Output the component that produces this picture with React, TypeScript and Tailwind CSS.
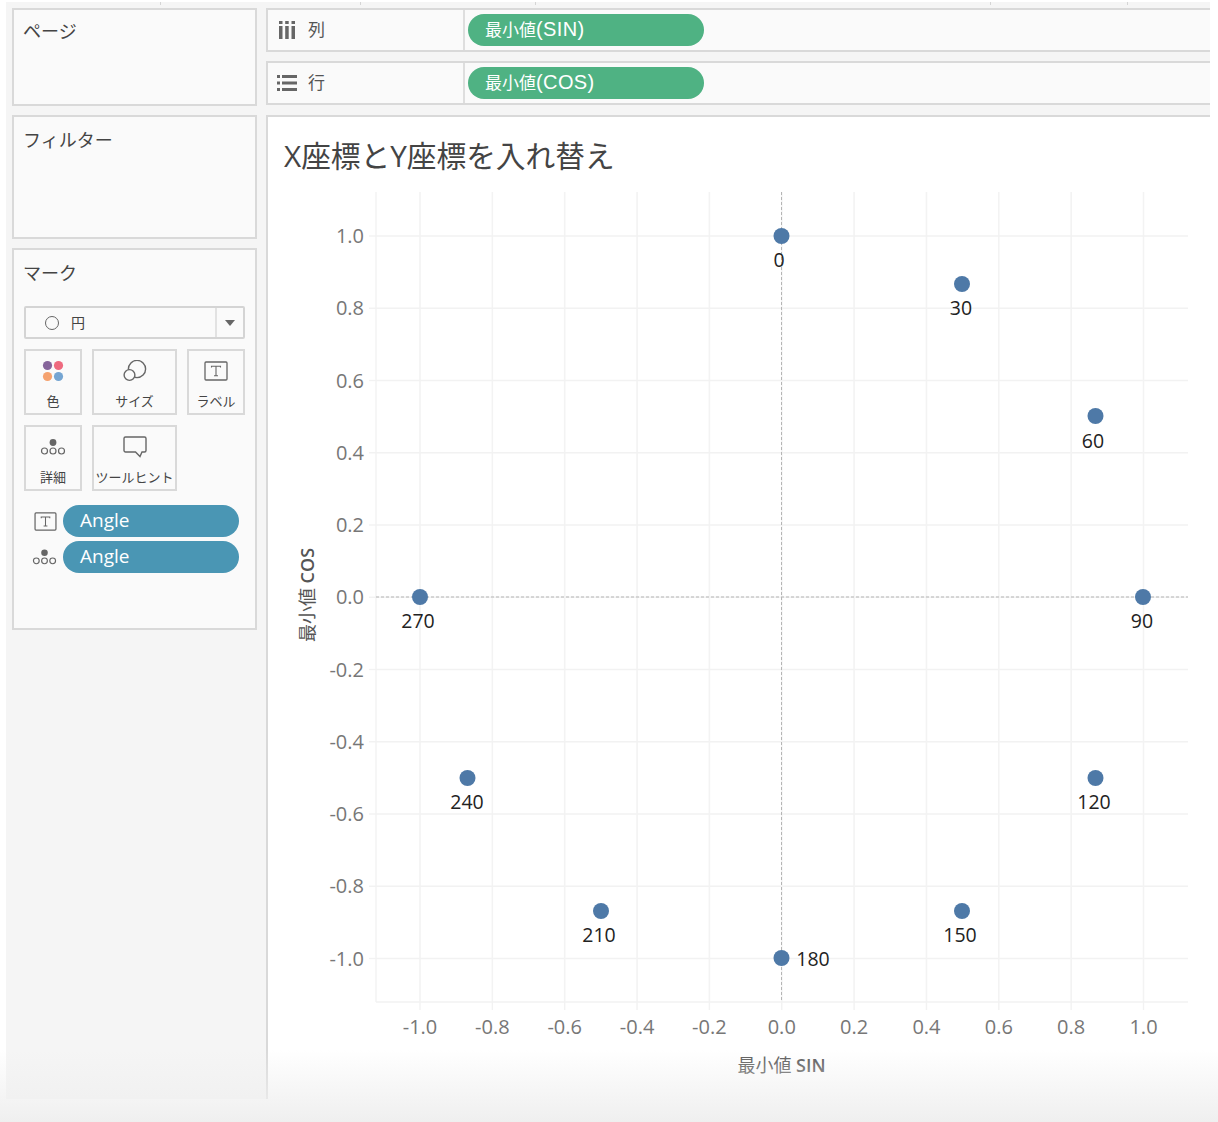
import React from 'react';

const sans = "font-['Open_Sans','Noto_Sans_CJK_JP',sans-serif]";

const points = [
  { a: 0, x: 781.5, y: 236, lx: 779, ly: 267 },
  { a: 30, x: 962, y: 284, lx: 961, ly: 315 },
  { a: 60, x: 1095.5, y: 416, lx: 1093, ly: 448 },
  { a: 90, x: 1143, y: 597, lx: 1142, ly: 628 },
  { a: 120, x: 1095.5, y: 778, lx: 1094, ly: 809 },
  { a: 150, x: 962, y: 911, lx: 960, ly: 942 },
  { a: 180, x: 781.5, y: 958, lx: 813, ly: 966 },
  { a: 210, x: 601, y: 911, lx: 599, ly: 942 },
  { a: 240, x: 467.5, y: 778, lx: 467, ly: 809 },
  { a: 270, x: 420, y: 597, lx: 418, ly: 628 },
];

const ticks = ['-1.0', '-0.8', '-0.6', '-0.4', '-0.2', '0.0', '0.2', '0.4', '0.6', '0.8', '1.0'];
const tickX = (i: number) => 420 + i * 72.35;
const tickY = (i: number) => 958.5 - i * 72.25;

function LabelIcon({ className }: { className?: string }) {
  return (
    <svg viewBox="0 0 24 20" className={className}>
      <rect x="1" y="1" width="22" height="18" rx="1" fill="none" stroke="#666" strokeWidth="1.3" />
      <path d="M7.5 6.5V5.2h9v1.3M12 5.2v9.6M10 14.8h4" fill="none" stroke="#666" strokeWidth="1.1" />
    </svg>
  );
}

function DetailIcon({ className }: { className?: string }) {
  return (
    <svg viewBox="0 0 26 18" className={className}>
      <circle cx="13" cy="4.5" r="3.4" fill="#666" />
      <circle cx="4.5" cy="13" r="3" fill="none" stroke="#666" strokeWidth="1.2" />
      <circle cx="13" cy="13" r="3" fill="none" stroke="#666" strokeWidth="1.2" />
      <circle cx="21.5" cy="13" r="3" fill="none" stroke="#666" strokeWidth="1.2" />
    </svg>
  );
}

function MarkButton({ label, icon, wide }: { label: string; icon: React.ReactNode; wide?: boolean }) {
  return (
    <div className={`h-[66px] border-2 border-[#d9d9d9] flex flex-col items-center ${wide ? 'w-[85px]' : 'w-[58px]'}`}>
      <div className="h-[40px] flex items-center justify-center">{icon}</div>
      <div className="text-[13px] leading-[20px] text-[#444] whitespace-nowrap">{label}</div>
    </div>
  );
}

function ShelfRow({ icon, label, cjk, latin }: { icon: React.ReactNode; label: string; cjk: string; latin: string }) {
  return (
    <div className="h-[44px] border-y-2 border-l-2 border-[#d9d9d9] bg-[#fafafa] flex items-center">
      <div className="w-[9px]" />
      <div className="w-[20px] flex justify-center">{icon}</div>
      <div className="ml-[11px] w-[155px] text-[17px] text-[#555]">{label}</div>
      <div className="self-stretch w-[2px] bg-[#dedede]" />
      <div className="ml-[3px] w-[236px] h-[32px] rounded-full bg-[#4fb283] text-white text-[17px] leading-[30px] pl-[17px]">
        {cjk}
        <span className="font-['Liberation_Sans',sans-serif] text-[20px] tracking-[0.4px]">{latin}</span>
      </div>
    </div>
  );
}

export default function App() {
  return (
    <div className={`relative w-[1218px] h-[1122px] bg-white overflow-hidden ${sans}`}>
      <div className="ml-[6px] mt-[2px] w-[1204px] h-[1097px] bg-[#f5f5f5] flex flex-col">
        <div className="h-[6px] flex shrink-0">
          <div className="ml-[154px] w-px h-[3px] bg-[#d5d5d5]" />
          <div className="ml-[199px] w-px h-[3px] bg-[#d5d5d5]" />
          <div className="ml-[174px] w-px h-[3px] bg-[#d5d5d5]" />
          <div className="ml-[454px] w-px h-[3px] bg-[#d5d5d5]" />
          <div className="ml-[136px] w-px h-[3px] bg-[#d5d5d5]" />
        </div>
        <div className="flex flex-1 min-h-0">
          <div className="ml-[6px] w-[245px] flex flex-col gap-[9px]">
            <div className="h-[98px] border-2 border-[#d9d9d9] bg-[#fafafa] px-[9px] py-[9px] text-[18px] leading-[24px] text-[#444]">ページ</div>
            <div className="h-[124px] border-2 border-[#d9d9d9] bg-[#fafafa] px-[9px] py-[11px] text-[18px] leading-[24px] text-[#444]">フィルター</div>
            <div className="h-[382px] border-2 border-[#d9d9d9] bg-[#fafafa] px-[10px]">
              <div className="mt-[11px] -ml-px text-[18px] leading-[24px] text-[#444]">マーク</div>
              <div className="mt-[21px] h-[33px] w-[221px] border-2 border-[#d4d4d4] rounded-[2px] flex items-center">
                <div className="ml-[19px] w-[14px] h-[14px] rounded-full border-[1.5px] border-[#666]" />
                <div className="ml-[12px] text-[14px] text-[#444] flex-1">円</div>
                <div className="w-[28px] h-full border-l-2 border-[#e2e2e2] flex items-center justify-center">
                  <div className="w-0 h-0 border-x-[5px] border-x-transparent border-t-[6px] border-t-[#666]" />
                </div>
              </div>
              <div className="mt-[10px] flex gap-[10px]">
                <MarkButton
                  label="色"
                  icon={
                    <svg viewBox="0 0 22 22" className="w-[22px] h-[22px]">
                      <circle cx="5.5" cy="5.5" r="4.6" fill="#86659b" />
                      <circle cx="16.5" cy="5.5" r="4.6" fill="#ee6a7f" />
                      <circle cx="5.5" cy="16.5" r="4.6" fill="#f5a26f" />
                      <circle cx="16.5" cy="16.5" r="4.6" fill="#75a5d2" />
                    </svg>
                  }
                />
                <MarkButton
                  wide
                  label="サイズ"
                  icon={
                    <svg viewBox="0 0 24 22" className="w-[24px] h-[22px]">
                      <circle cx="14" cy="9" r="8.6" fill="none" stroke="#666" strokeWidth="1.4" />
                      <circle cx="6.5" cy="15" r="5.4" fill="#fafafa" stroke="#666" strokeWidth="1.4" />
                    </svg>
                  }
                />
                <MarkButton label="ラベル" icon={<LabelIcon className="w-[24px] h-[20px]" />} />
              </div>
              <div className="mt-[10px] flex gap-[10px]">
                <MarkButton label="詳細" icon={<DetailIcon className="w-[26px] h-[18px]" />} />
                <MarkButton
                  wide
                  label="ツールヒント"
                  icon={
                    <svg viewBox="0 0 24 22" className="w-[24px] h-[22px]">
                      <path d="M2.5 1h19a1.5 1.5 0 0 1 1.5 1.5v12a1.5 1.5 0 0 1-1.5 1.5H19l-2 4.5-4.5-4.5H2.5A1.5 1.5 0 0 1 1 14.5v-12A1.5 1.5 0 0 1 2.5 1z" fill="none" stroke="#666" strokeWidth="1.4" />
                    </svg>
                  }
                />
              </div>
              <div className="mt-[14px] flex flex-col gap-[4px]">
                <div className="flex items-center">
                  <div className="ml-[10px] w-[29px]"><LabelIcon className="w-[23px] h-[19px]" /></div>
                  <div className="w-[176px] h-[32px] rounded-full bg-[#4a96b4] text-white text-[19px] leading-[31px] pl-[17px]">Angle</div>
                </div>
                <div className="flex items-center">
                  <div className="ml-[8px] w-[31px]"><DetailIcon className="w-[25px] h-[18px]" /></div>
                  <div className="w-[176px] h-[32px] rounded-full bg-[#4a96b4] text-white text-[19px] leading-[31px] pl-[17px]">Angle</div>
                </div>
              </div>
            </div>
          </div>
          <div className="ml-[9px] flex-1 flex flex-col min-w-0">
            <ShelfRow
              label="列"
              cjk="最小値"
              latin="(SIN)"
              icon={
                <svg viewBox="0 0 18 18" className="w-[18px] h-[18px]">
                  <path d="M1 0h3.5v3H1zM1 5h3.5v13H1zM7.2 0h3.5v3H7.2zM7.2 5h3.5v13H7.2zM13.5 0H17v3h-3.5zM13.5 5H17v13h-3.5z" fill="#666" />
                </svg>
              }
            />
            <div className="h-[9px]" />
            <ShelfRow
              label="行"
              cjk="最小値"
              latin="(COS)"
              icon={
                <svg viewBox="0 0 20 16" className="w-[20px] h-[16px]">
                  <path d="M0 0h3v3H0zM0 6.5h3v3H0zM0 13h3v3H0zM5 0h15v3H5zM5 6.5h15v3H5zM5 13h15v3H5z" fill="#666" />
                </svg>
              }
            />
            <div className="h-[10px]" />
            <div className="flex-1 bg-white border-t-2 border-l-2 border-[#d9d9d9] min-h-0">
              <div className="h-[73px] pl-[16px] pt-[19px] text-[29.7px] leading-[40px] text-[#444] whitespace-nowrap">X座標とY座標を入れ替え</div>
              <svg viewBox="268 190 942 909" className="block w-[942px] h-[909px]">
                {ticks.map((t, i) => (
                  <g key={t}>
                    <line x1={tickX(i)} x2={tickX(i)} y1={192} y2={1002} stroke="#f3f3f3" strokeWidth="1.6" />
                    <line x1={376} x2={1188} y1={tickY(i)} y2={tickY(i)} stroke="#f2f2f2" strokeWidth="1.4" />
                    <line x1={tickX(i)} x2={tickX(i)} y1={1002} y2={1010} stroke="#f2f2f2" strokeWidth="1.4" />
                    <line x1={369} x2={376} y1={tickY(i)} y2={tickY(i)} stroke="#f2f2f2" strokeWidth="1.4" />
                    <text x={tickX(i)} y={1034} textAnchor="middle" fontSize="20" fill="#777">{t}</text>
                    <text x={364} y={tickY(i) + 7} textAnchor="end" fontSize="20" fill="#777">{t}</text>
                  </g>
                ))}
                <line x1={376} x2={376} y1={192} y2={1002} stroke="#f3f3f3" strokeWidth="1.4" />
                <line x1={376} x2={1188} y1={1002} y2={1002} stroke="#f2f2f2" strokeWidth="1.6" />
                <line x1={781.5} x2={781.5} y1={192} y2={1002} stroke="#b5b5b5" strokeWidth="1" strokeDasharray="3 2" />
                <line x1={376} x2={1188} y1={597} y2={597} stroke="#b5b5b5" strokeWidth="1" strokeDasharray="3 2" />
                {points.map(p => (
                  <g key={p.a}>
                    <circle cx={p.x} cy={p.y} r="8" fill="#4e79a7" />
                    <text x={p.lx} y={p.ly} textAnchor="middle" fontSize="19.5" fill="#222">{p.a}</text>
                  </g>
                ))}
                <text x={781.5} y={1072} textAnchor="middle" fontSize="18" fill="#555">
                  最小値 <tspan fontWeight="600">SIN</tspan>
                </text>
                <text transform="translate(314 595) rotate(-90)" textAnchor="middle" fontSize="18" fill="#555">
                  最小値 <tspan fontWeight="600">COS</tspan>
                </text>
              </svg>
            </div>
          </div>
        </div>
      </div>
      <div className="absolute left-0 right-0 bottom-0 h-[72px] bg-gradient-to-b from-transparent to-[#efefef]" />
    </div>
  );
}
